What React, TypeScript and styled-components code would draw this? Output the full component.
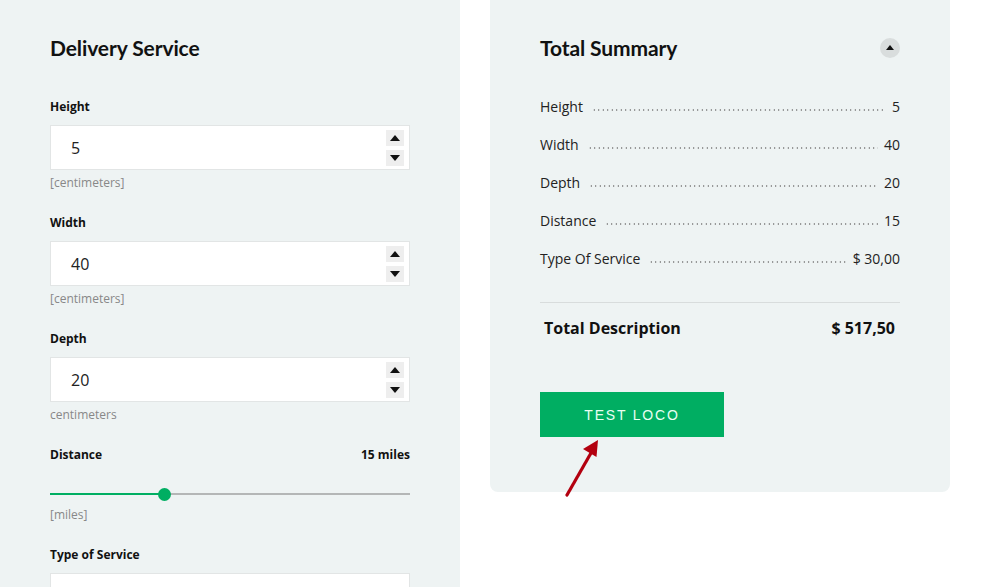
import React from 'react';
import styled, { createGlobalStyle } from 'styled-components';

const GlobalStyle = createGlobalStyle`
  html, body {
    margin: 0;
    padding: 0;
    background: #ffffff;
    overflow: hidden;
  }
  body {
    font-family: 'Open Sans', 'Liberation Sans', sans-serif;
    color: #222;
  }
`;

const PANEL_BG = '#eef3f3';
const GREEN = '#00ae62';

const fields = [
  { label: 'Height', value: '5', hint: '[centimeters]' },
  { label: 'Width', value: '40', hint: '[centimeters]' },
  { label: 'Depth', value: '20', hint: 'centimeters' },
];

const summary = [
  { name: 'Height', value: '5' },
  { name: 'Width', value: '40' },
  { name: 'Depth', value: '20' },
  { name: 'Distance', value: '15' },
  { name: 'Type Of Service', value: '$ 30,00' },
];

const distance = { value: 15, min: 1, max: 45 };

export default function App() {
  const pct = ((distance.value - distance.min) / (distance.max - distance.min)) * 100;

  return (
    <>
      <GlobalStyle />
      <Page>
        <FormPanel>
          <Heading>Delivery Service</Heading>
          {fields.map((f) => (
            <Field key={f.label}>
              <Label>{f.label}</Label>
              <InputBox>
                <InputValue>{f.value}</InputValue>
                <Spinner>
                  <SpinButton aria-label="up">
                    <Triangle $dir="up" />
                  </SpinButton>
                  <SpinButton aria-label="down">
                    <Triangle $dir="down" />
                  </SpinButton>
                </Spinner>
              </InputBox>
              <Hint>{f.hint}</Hint>
            </Field>
          ))}
          <Field>
            <LabelRow>
              <Label>Distance</Label>
              <Label>{distance.value} miles</Label>
            </LabelRow>
            <Slider>
              <Track />
              <Fill style={{ width: `${pct}%` }} />
              <Thumb style={{ left: `${pct}%` }} />
            </Slider>
            <Hint>[miles]</Hint>
          </Field>
          <Field>
            <Label>Type of Service</Label>
            <InputBox />
          </Field>
        </FormPanel>

        <SummaryPanel>
          <SummaryHead>
            <Heading>Total Summary</Heading>
            <Collapse aria-label="collapse">
              <Triangle $dir="up" $small />
            </Collapse>
          </SummaryHead>
          <SummaryList>
            {summary.map((s) => (
              <SummaryRow key={s.name}>
                <RowName>{s.name}</RowName>
                <Leader />
                <RowValue>{s.value}</RowValue>
              </SummaryRow>
            ))}
          </SummaryList>
          <TotalRow>
            <span>Total Description</span>
            <span>$ 517,50</span>
          </TotalRow>
          <ActionButton>TEST LOCO</ActionButton>
          <Pointer width="40" height="62" viewBox="0 0 40 62">
            <line x1="4" y1="59" x2="28" y2="17" stroke="#b3000f" strokeWidth="3.2" strokeLinecap="round" />
            <polygon points="35,4 33.5,21 20,13" fill="#b3000f" />
          </Pointer>
        </SummaryPanel>
      </Page>
    </>
  );
}

const Page = styled.div`
  display: flex;
  align-items: flex-start;
  gap: 30px;
  width: 990px;
  height: 587px;
  overflow: hidden;
`;

const FormPanel = styled.div`
  width: 460px;
  box-sizing: border-box;
  min-height: 700px;
  padding: 36px 50px 0;
  background: ${PANEL_BG};
`;

const SummaryPanel = styled.div`
  position: relative;
  width: 460px;
  box-sizing: border-box;
  padding: 36px 50px 55px;
  background: ${PANEL_BG};
  border-radius: 0 0 8px 8px;
`;

const Heading = styled.h2`
  margin: 0;
  font-family: 'Lato', 'Liberation Sans', sans-serif;
  font-weight: 700;
  font-size: 21px;
  line-height: 24px;
  color: #111;
  letter-spacing: -0.1px;
`;

const Field = styled.div`
  margin-top: 38px;

  & + & {
    margin-top: 22px;
  }
`;

const Label = styled.div`
  font-size: 12px;
  line-height: 18px;
  font-weight: 700;
  color: #111;
`;

const LabelRow = styled.div`
  display: flex;
  justify-content: space-between;
  align-items: center;
`;

const InputBox = styled.div`
  display: flex;
  align-items: center;
  justify-content: space-between;
  box-sizing: border-box;
  height: 45px;
  margin-top: 9px;
  padding: 0 5px 0 20px;
  background: #fff;
  border: 1px solid #e2e5e5;
`;

const InputValue = styled.span`
  font-size: 16px;
  color: #222;
`;

const Spinner = styled.div`
  display: flex;
  flex-direction: column;
  gap: 4px;
`;

const SpinButton = styled.button`
  display: flex;
  align-items: center;
  justify-content: center;
  width: 18px;
  height: 16px;
  padding: 0;
  border: 0;
  background: #eeeeee;
`;

const Triangle = styled.span<{ $dir: 'up' | 'down'; $small?: boolean }>`
  width: 0;
  height: 0;
  border-left: ${(p) => (p.$small ? 4 : 5)}px solid transparent;
  border-right: ${(p) => (p.$small ? 4 : 5)}px solid transparent;
  ${(p) =>
    p.$dir === 'up'
      ? `border-bottom: ${p.$small ? 5 : 6}px solid #111;`
      : `border-top: ${p.$small ? 5 : 6}px solid #111;`}
`;

const Hint = styled.div`
  margin-top: 4px;
  font-size: 12px;
  line-height: 18px;
  color: #888;
`;

const Slider = styled.div`
  position: relative;
  height: 12px;
  margin-top: 24px;
  margin-bottom: 6px;
`;

const Track = styled.div`
  position: absolute;
  left: 0;
  right: 0;
  top: 5px;
  height: 2px;
  background: #b4b6b6;
`;

const Fill = styled.div`
  position: absolute;
  left: 0;
  top: 5px;
  height: 2px;
  background: ${GREEN};
`;

const Thumb = styled.div`
  position: absolute;
  top: 0;
  width: 13px;
  height: 13px;
  margin-left: -7px;
  margin-top: -0.5px;
  border-radius: 50%;
  background: ${GREEN};
`;

const SummaryHead = styled.div`
  display: flex;
  justify-content: space-between;
  align-items: center;
`;

const Collapse = styled.button`
  display: flex;
  align-items: center;
  justify-content: center;
  width: 20px;
  height: 20px;
  padding: 0 0 1px;
  border: 0;
  border-radius: 50%;
  background: #d9dddd;
`;

const SummaryList = styled.div`
  display: flex;
  flex-direction: column;
  gap: 18px;
  margin-top: 36px;
`;

const SummaryRow = styled.div`
  display: flex;
  align-items: center;
  height: 20px;
  font-size: 14px;
  color: #222;
`;

const RowName = styled.span`
  flex: none;
`;

const RowValue = styled.span`
  flex: none;
`;

const Leader = styled.span`
  flex: 1;
  height: 2px;
  margin: 8px 6px 0 9px;
  background-image: radial-gradient(circle, #777 0.6px, transparent 0.9px);
  background-size: 4.5px 2px;
  background-repeat: repeat-x;
`;

const TotalRow = styled.div`
  display: flex;
  justify-content: space-between;
  align-items: center;
  margin-top: 34px;
  padding: 14px 5px 0 4px;
  border-top: 1px solid #d8dcdc;
  font-size: 16px;
  line-height: 22px;
  font-weight: 700;
  color: #111;
`;

const ActionButton = styled.button`
  display: block;
  width: 184px;
  height: 45px;
  margin-top: 53px;
  padding: 0;
  border: 0;
  background: ${GREEN};
  color: #e9fff2;
  font-family: 'Liberation Sans', Arial, sans-serif;
  font-size: 14px;
  letter-spacing: 1.8px;
`;

const Pointer = styled.svg`
  position: absolute;
  left: 73px;
  top: 436px;
  overflow: visible;
`;
